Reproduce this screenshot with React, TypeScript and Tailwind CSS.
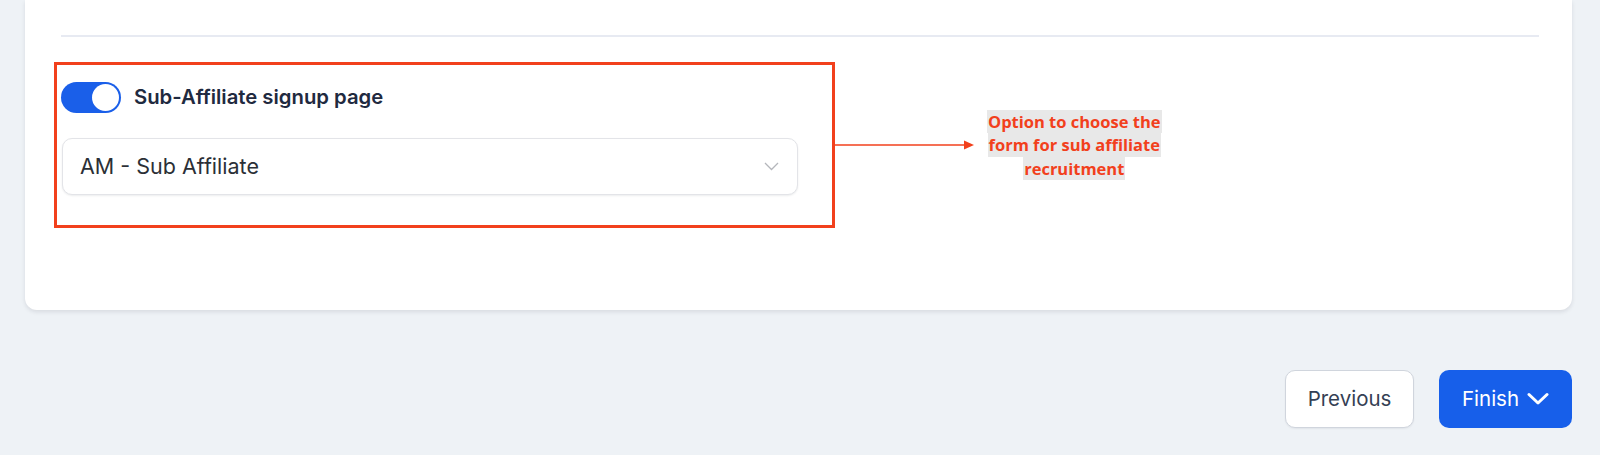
const Toggle = () => (
  <div className="w-[60px] h-[31px] rounded-full bg-[#1a5fe9] flex items-center justify-end pr-[2px]">
    <div className="w-[27px] h-[27px] rounded-full bg-white" />
  </div>
);

const SelectBox = ({ value }: { value: string }) => (
  <div className="w-[736px] h-[57px] rounded-[10px] border border-[#e3e4e8] bg-white shadow-[0_1px_2px_rgba(16,24,40,0.08)] flex items-center justify-between pl-[17px] pr-[18px]">
    <span className="text-[21.5px] text-[#2b2f36]">{value}</span>
    <svg width="15" height="9" viewBox="0 0 15 9" fill="none">
      <path d="M1 1l6.5 6.5L14 1" stroke="#b4b6bb" strokeWidth="1.3" />
    </svg>
  </div>
);

const Arrow = () => (
  <svg width="140" height="12" viewBox="0 0 140 12" className="shrink-0">
    <line x1="0" y1="6" x2="132" y2="6" stroke="#f2401c" strokeWidth="1.6" />
    <path d="M129 1.5L139 6L129 10.5Z" fill="#f2401c" />
  </svg>
);

const Note = ({ lines }: { lines: string[] }) => (
  <div className="ml-[12px] flex flex-col items-center font-['Open_Sans',sans-serif] font-bold text-[16.5px] text-[#f2401c] leading-[23.5px]">
    {lines.map((l) => (
      <span key={l} className="bg-[#e8e8e8] px-[1px]">
        {l}
      </span>
    ))}
  </div>
);

export default function App() {
  return (
    <div className="h-[455px] bg-[#eef2f6] font-['Inter',sans-serif] overflow-hidden">
      <div className="ml-[25px] mr-[28px] bg-white rounded-b-[12px] shadow-[0_2px_4px_rgba(16,24,40,0.1)] pl-[36px] pr-[33px] pt-[35px] pb-[82px]">
        <div className="h-[2px] bg-[#e7eaf2]" />
        <div className="mt-[25px] -ml-[7px] flex items-center">
          <div className="w-[781px] border-[3px] border-[#f2401c] pl-[4px] pt-[17px] pb-[30px]">
            <div className="flex items-center gap-[13px]">
              <Toggle />
              <span className="text-[20.3px] font-semibold text-[#1f2a40]">
                Sub-Affiliate signup page
              </span>
            </div>
            <div className="mt-[25px] ml-[1px]">
              <SelectBox value="AM - Sub Affiliate" />
            </div>
          </div>
          <Arrow />
          <Note lines={["Option to choose the", "form for sub affiliate", "recruitment"]} />
        </div>
      </div>
      <div className="mt-[60px] mr-[28px] flex justify-end gap-[25px]">
        <button className="w-[129px] h-[58px] rounded-[10px] border border-[#d0d5dd] bg-white shadow-[0_1px_2px_rgba(16,24,40,0.06)] text-[20.5px] text-[#344054]">
          Previous
        </button>
        <button className="w-[133px] h-[58px] rounded-[10px] bg-[#175fea] text-white text-[20.5px] flex items-center justify-center gap-[8px]">
          Finish
          <svg width="22" height="14" viewBox="0 0 22 14" fill="none">
            <path d="M2 2.5l9 8.5 9-8.5" stroke="white" strokeWidth="3" strokeLinecap="round" strokeLinejoin="round" />
          </svg>
        </button>
      </div>
    </div>
  );
}
